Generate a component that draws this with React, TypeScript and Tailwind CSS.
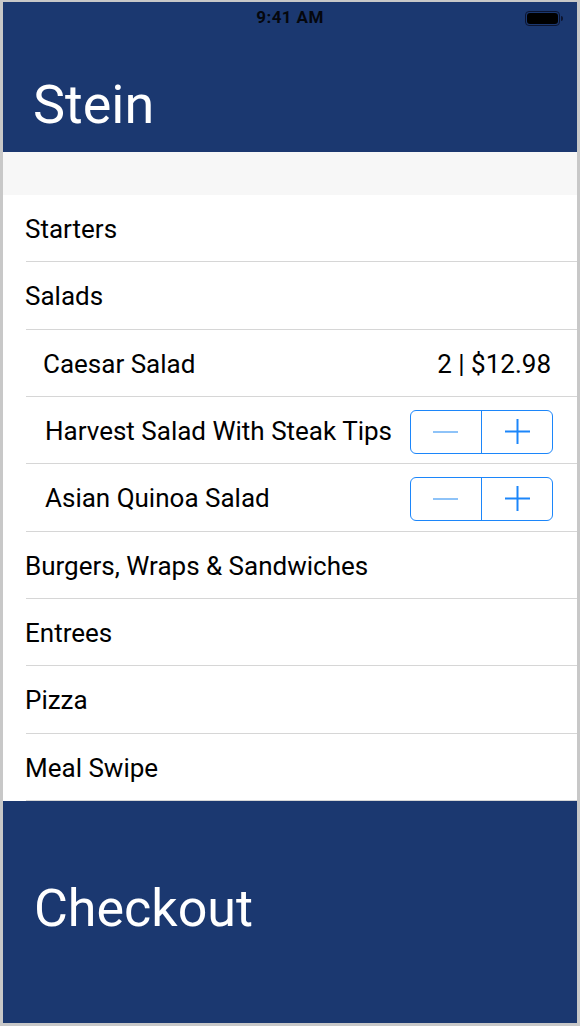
import { useState } from 'react';

const font = { fontFamily: 'Roboto, "Liberation Sans", sans-serif' };

type Row =
  | { kind: 'section'; label: string }
  | { kind: 'price'; label: string; price: string }
  | { kind: 'stepper'; label: string };

const rows: Row[] = [
  { kind: 'section', label: 'Starters' },
  { kind: 'section', label: 'Salads' },
  { kind: 'price', label: 'Caesar Salad', price: '2 | $12.98' },
  { kind: 'stepper', label: 'Harvest Salad With Steak Tips' },
  { kind: 'stepper', label: 'Asian Quinoa Salad' },
  { kind: 'section', label: 'Burgers, Wraps & Sandwiches' },
  { kind: 'section', label: 'Entrees' },
  { kind: 'section', label: 'Pizza' },
  { kind: 'section', label: 'Meal Swipe' },
];

function Stepper() {
  const [count, setCount] = useState(0);
  return (
    <div className="flex w-[143px] h-[44px] rounded-[6px] border-[1.5px] border-[#1c86fa] overflow-hidden">
      <button
        onClick={() => setCount(Math.max(0, count - 1))}
        className="flex-1 flex items-center justify-center"
      >
        <span className="block w-[25px] h-[2px] bg-[#8ec3f8]" />
      </button>
      <div className="w-[1.5px] bg-[#1c86fa]" />
      <button
        onClick={() => setCount(count + 1)}
        className="flex-1 flex items-center justify-center"
      >
        <svg width="25" height="25" viewBox="0 0 25 25">
          <path d="M12.5 0v25M0 12.5h25" stroke="#1c86fa" strokeWidth="2" />
        </svg>
      </button>
    </div>
  );
}

export default function App() {
  return (
    <div
      className="w-[580px] h-[1026px] flex flex-col bg-white border-t-2 border-l-[3px] border-r-[3px] border-b-[3px] border-[#c8c8c8]"
      style={font}
    >
      {/* Header */}
      <div className="h-[150px] bg-[#1b3870] flex flex-col">
        <div className="h-[32px] grid grid-cols-3 items-center">
          <div />
          <div className="text-center text-[17px] font-bold text-[#05070d] tracking-[0.4px]">9:41 AM</div>
          <div className="flex items-center justify-end pr-[14px]">
            <div className="w-[35px] h-[15px] rounded-[4px] border border-[#0d1530] p-[1px]">
              <div className="w-full h-full rounded-[3px] bg-black" />
            </div>
            <div className="w-[2px] h-[5px] ml-[1px] rounded-r-sm bg-[#0d1530]" />
          </div>
        </div>
        <div className="pt-[44px] pl-[30px]">
          <h1 className="text-[54px] leading-none text-white">Stein</h1>
        </div>
      </div>

      {/* Spacer */}
      <div className="h-[43px] bg-[#f7f7f7]" />

      {/* Menu list */}
      <div className="h-[606px] flex flex-col">
        {rows.map((row) => (
          <div key={row.label} className="flex-1 flex flex-col">
            <div className="flex-1 flex items-center justify-between pt-[3px]">
              {row.kind === 'section' && (
                <span className="pl-[22px] text-[26px] text-black">{row.label}</span>
              )}
              {row.kind === 'price' && (
                <>
                  <span className="pl-[40px] text-[26px] text-black">{row.label}</span>
                  <span className="pr-[26px] text-[26px] text-black">{row.price}</span>
                </>
              )}
              {row.kind === 'stepper' && (
                <>
                  <span className="pl-[42px] text-[26px] text-black">{row.label}</span>
                  <div className="pr-[24px]">
                    <Stepper />
                  </div>
                </>
              )}
            </div>
            <div className="h-px ml-[23px] bg-[#d6d6d6]" />
          </div>
        ))}
      </div>

      {/* Checkout */}
      <div className="flex-1 bg-[#1b3870] flex items-center pl-[31px] pb-[6px]">
        <span className="text-[52px] leading-none text-white">Checkout</span>
      </div>
    </div>
  );
}
